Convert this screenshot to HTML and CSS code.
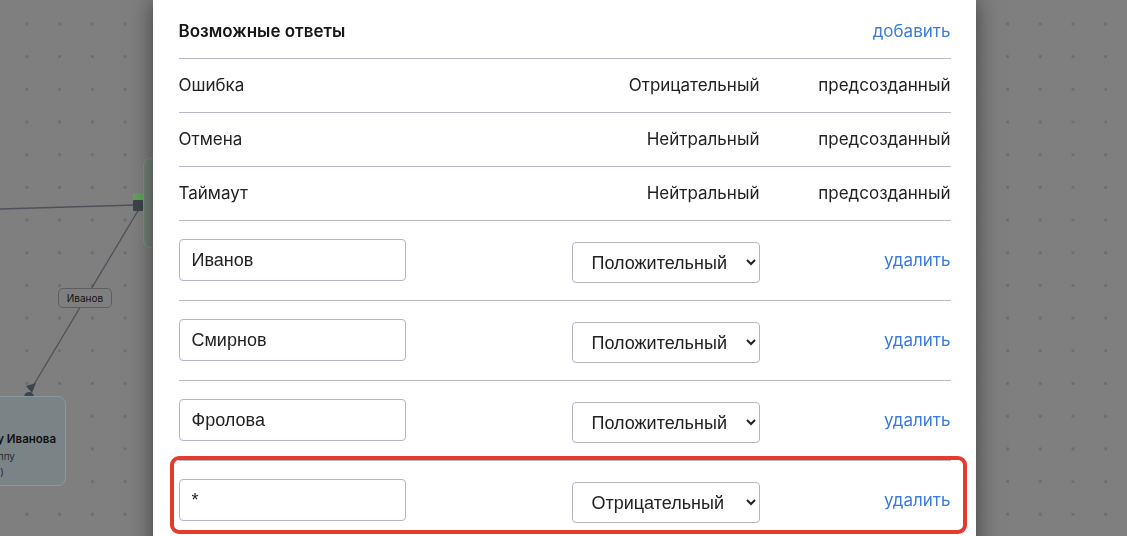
FILE: index.html
```html
<!DOCTYPE html>
<html lang="ru">
<head>
    <meta charset="UTF-8">
    <meta name="viewport" content="width=device-width, initial-scale=1.0">
    <title>Возможные ответы</title>
    <link rel="stylesheet" href="styles.css">
</head>
<body>
    <div class="canvas">
        <svg class="edges" width="160" height="536" viewBox="0 0 160 536">
            <line x1="0" y1="209" x2="136" y2="205" stroke="#50505a" stroke-width="1.3"/>
            <line x1="139" y1="209" x2="33" y2="386" stroke="#50505a" stroke-width="1.3"/>
            <rect x="133" y="193" width="10" height="9" fill="#62a05c"/>
            <rect x="133" y="200" width="10" height="11" rx="1" fill="#3e444c"/>
            <path d="M26 386 L36 383 L32 393 Z" fill="#3e444c"/>
            <path d="M24 397 a5 5 0 0 1 10 0 Z" fill="#3e444c"/>
        </svg>
        <div class="node node-top"></div>
        <div class="edge-label">Иванов</div>
        <div class="node node-bottom">
            <div class="node-title">в группу Иванова</div>
            <div class="node-sub">в группу</div>
            <div class="node-sub last">(1)</div>
        </div>
    </div>

    <div class="backdrop">
        <div class="modal">
            <div class="row head">
                <span class="title">Возможные ответы</span>
                <span></span>
                <a class="link" href="#">добавить</a>
            </div>
            <div class="row">
                <span>Ошибка</span>
                <span class="right">Отрицательный</span>
                <span class="right">предсозданный</span>
            </div>
            <div class="row">
                <span>Отмена</span>
                <span class="right">Нейтральный</span>
                <span class="right">предсозданный</span>
            </div>
            <div class="row">
                <span>Таймаут</span>
                <span class="right">Нейтральный</span>
                <span class="right">предсозданный</span>
            </div>
            <div class="row edit">
                <div><input type="text" class="answer" value="Иванов"></div>
                <select class="kind">
                    <option selected>Положительный</option>
                    <option>Нейтральный</option>
                    <option>Отрицательный</option>
                </select>
                <a class="link" href="#">удалить</a>
            </div>
            <div class="row edit">
                <div><input type="text" class="answer" value="Смирнов"></div>
                <select class="kind">
                    <option selected>Положительный</option>
                    <option>Нейтральный</option>
                    <option>Отрицательный</option>
                </select>
                <a class="link" href="#">удалить</a>
            </div>
            <div class="row edit">
                <div><input type="text" class="answer" value="Фролова"></div>
                <select class="kind">
                    <option selected>Положительный</option>
                    <option>Нейтральный</option>
                    <option>Отрицательный</option>
                </select>
                <a class="link" href="#">удалить</a>
            </div>
            <div class="row edit marked">
                <div><input type="text" class="answer" value="*"></div>
                <select class="kind">
                    <option>Положительный</option>
                    <option>Нейтральный</option>
                    <option selected>Отрицательный</option>
                </select>
                <a class="link" href="#">удалить</a>
            </div>
        </div>
    </div>
</body>
</html>
```

FILE: styles.css
```css
body {
    margin: 0;
    height: 536px;
    overflow: hidden;
    font-family: "Inter", "Noto Sans", sans-serif;
    background-color: #7f7f7f;
    background-image: radial-gradient(circle, #6e6e6e 1.3px, transparent 1.7px);
    background-size: 32.7px 32.7px;
    background-position: 10.6px 7.6px;
}

/* graph behind the dialog (already dimmed) */
.canvas {
    position: relative;
    height: 100%;
}

.edges {
    position: absolute;
    left: 0;
    top: 0;
}

.node {
    position: absolute;
    border-radius: 8px;
    background-color: #768079;
    border: 1px solid #86918b;
}

.node-top {
    left: 143px;
    top: 158px;
    width: 60px;
    height: 88px;
}

.node-bottom {
    left: -160px;
    top: 396px;
    width: 224px;
    height: 88px;
    background-color: #7a8385;
    border-color: #8a999b;
    text-align: right;
    white-space: nowrap;
    color: #111;
}

.node-title {
    margin: 35px 9px 0 0;
    font-size: 11.5px;
    font-weight: 600;
}

.node-sub {
    margin: 4px 50px 0 0;
    font-size: 10px;
    color: #2c2c2c;
}

.node-sub.last {
    margin-right: 61px;
}

.edge-label {
    position: absolute;
    left: 58px;
    top: 288px;
    width: 52px;
    height: 18px;
    border: 1px solid #5e5e5e;
    border-radius: 5px;
    background-color: #7f7f7f;
    font-size: 10px;
    line-height: 18px;
    text-align: center;
    color: #151515;
}

/* dialog */
.backdrop {
    position: fixed;
    inset: 0;
    display: flex;
    justify-content: center;
    align-items: flex-start;
    padding-left: 1px;
}

.modal {
    width: 823px;
    height: 600px;
    box-sizing: border-box;
    padding: 0 25px 0 26px;
    background-color: #fff;
    box-shadow: 0 0 22px rgba(0, 0, 0, 0.5);
    color: #222;
    font-size: 17px;
}

.row {
    position: relative;
    display: grid;
    grid-template-columns: 1fr 188px 191px;
    align-items: center;
    padding: 16px 0 17px;
    line-height: 20px;
    border-bottom: 1px solid #b9b9c9;
}

.row.head {
    padding-top: 21px;
}

.title {
    font-weight: 600;
    color: #161616;
}

.right {
    text-align: right;
}

.link {
    justify-self: end;
    color: #3a7bdc;
    text-decoration: none;
}

.row.edit {
    grid-template-rows: 42px;
    padding: 18px 0 19px;
}

.answer {
    display: block;
    box-sizing: border-box;
    width: 227px;
    height: 42px;
    padding: 0 12px;
    border: 1px solid #b5b5c3;
    border-radius: 4px;
    font-family: "Liberation Sans", Arial, sans-serif;
    font-size: 18px;
    color: #222;
}

.kind {
    align-self: start;
    box-sizing: border-box;
    width: 188px;
    height: 41px;
    margin-top: 3px;
    padding: 0 4px 0 15px;
    border: 1px solid #b5b5c3;
    border-radius: 4px;
    background-color: #fff;
    font-family: "Liberation Sans", Arial, sans-serif;
    font-size: 18px;
    color: #222;
}

.row.marked::after {
    content: "";
    position: absolute;
    left: -9px;
    right: -16px;
    top: -5px;
    height: 70px;
    border: 4px solid #e23c2f;
    border-radius: 9px;
    pointer-events: none;
}
```
